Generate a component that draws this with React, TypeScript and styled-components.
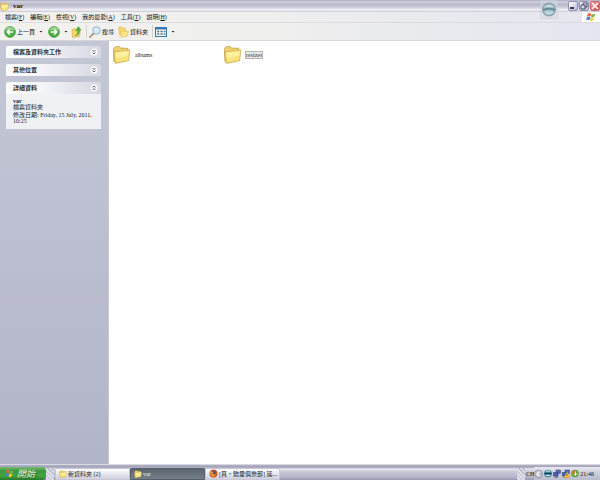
import React from 'react';
import styled, { createGlobalStyle } from 'styled-components';

const GlobalStyle = createGlobalStyle`
  * { box-sizing: border-box; }
  html, body { margin: 0; padding: 0; }
  body, button {
    font-family: "Liberation Serif", "Noto Sans CJK TC", serif;
    font-size: 6px;
    line-height: 8px;
    color: #111;
  }
  button { margin: 0; padding: 0; border: 0; background: none; white-space: nowrap; }
  svg { display: block; flex: none; }
`;

const Desktop = styled.div`
  display: flex;
  flex-direction: column;
  min-height: 100vh;
  background: #fff;
`;

const TitleBar = styled.header`
  display: flex;
  align-items: center;
  height: 12px;
  background: linear-gradient(#a9a9bf 0, #d4d4e0 2px, #b7b7cb 4px, #c9c9d8 7px, #f4f4f9 10px, #c4c4d2 12px);
`;

const TitleText = styled.h1`
  margin: 0 auto 0 4px;
  font-size: 7px;
  line-height: 10px;
`;

const Orb = styled.div`
  align-self: flex-start;
  margin-right: 10px;
  height: 12px;
  z-index: 1;
`;

const WindowButtons = styled.div`
  display: flex;
  gap: 1px;
`;

const WindowButton = styled.button<{ $close?: boolean }>`
  display: flex;
  align-items: center;
  justify-content: center;
  width: 10px;
  height: 10px;
  border: 1px solid ${p => (p.$close ? '#c9696f' : '#8f90b0')};
  border-radius: 2px;
  background: ${p => (p.$close
    ? 'linear-gradient(135deg, #efa5a3, #cf4248)'
    : 'linear-gradient(135deg, #fff, #b7b9d0)')};
`;

const MenuBar = styled.nav`
  display: flex;
  align-items: center;
  gap: 6px;
  height: 11px;
  padding-left: 5px;
  background: linear-gradient(90deg, #f2f1ed, #f0f0ee 40%, #e4e5ef);
  border-bottom: 1px solid #dcdce0;
`;

const FlagBox = styled.div`
  display: flex;
  align-items: center;
  justify-content: center;
  width: 18px;
  height: 10px;
  margin-left: auto;
  background: #fff;
`;

const ToolBar = styled.div`
  display: flex;
  align-items: center;
  height: 18px;
  padding-left: 4px;
  background: linear-gradient(90deg, #f2f1ed, #f0f0ee 40%, #e4e5ef);
  border-bottom: 1px solid #d5d5dc;
`;

const Tool = styled.button<{ $gap?: number }>`
  display: flex;
  align-items: center;
  gap: 1px;
  margin-right: ${p => p.$gap ?? 4}px;
`;

const Caret = styled.span`
  width: 4px;
  height: 2px;
  margin-left: 3px;
  background: #222;
  clip-path: polygon(0 0, 100% 0, 50% 100%);
`;

const Divider = styled.span`
  width: 1px;
  height: 13px;
  margin-right: 2px;
  background: #d3d2d0;
`;

const Body = styled.main`
  display: flex;
  flex: 1;
`;

const SideBar = styled.aside`
  display: flex;
  flex-direction: column;
  gap: 6px;
  width: 109px;
  padding: 5px 7px 0 6px;
  background: linear-gradient(#c4c8d5, #b2b4c9);
  border-right: 1px solid #c6c8d4;
`;

const Panel = styled.section`
  color: #222;
`;

const PanelHeader = styled.button`
  display: flex;
  align-items: center;
  justify-content: space-between;
  width: 100%;
  height: 12px;
  padding: 0 2px 0 7px;
  border-radius: 2px 2px 0 0;
  background: linear-gradient(90deg, #fff, #f6f6f9 35%, #d5d7e2);
  font-weight: bold;
  color: #333;
`;

const PanelBody = styled.div`
  padding: 4px 7px 3px;
  background: #f0f1f5;
  line-height: 6px;
  p { margin: 0 0 2px; }
  strong { display: block; }
`;

const Files = styled.ul`
  display: grid;
  grid-template-columns: 111px 111px;
  align-content: start;
  flex: 1;
  margin: 0;
  padding: 4px 3px;
  list-style: none;
`;

const FileItem = styled.li`
  display: flex;
  align-items: center;
  gap: 4px;
`;

const FileName = styled.span<{ $selected?: boolean }>`
  line-height: 6px;
  color: ${p => (p.$selected ? '#444' : '#222')};
  background: ${p => (p.$selected ? '#e9e8e5' : 'transparent')};
  outline: ${p => (p.$selected ? '1px solid #b4b4b4' : 'none')};
`;

const TaskBar = styled.footer`
  display: flex;
  align-items: center;
  height: 16px;
  padding-top: 2px;
  border-top: 1px solid #d8d8e0;
  background: linear-gradient(#b5b6c9 0, #9c9db4 2px, #e8e8f0 4px, #c5c6d6 7px, #b6b7cb 12px, #9798b1 15px);
`;

const StartButton = styled.button`
  display: flex;
  align-items: center;
  gap: 3px;
  width: 46px;
  height: 13px;
  padding-left: 5px;
  border-radius: 0 4px 4px 0;
  background: linear-gradient(#79bd75, #3c963d 4px, #43a443 9px, #28772c);
  color: #e4f2dd;
  font-size: 9px;
  font-style: italic;
  line-height: 12px;
  text-shadow: 1px 1px 1px #22602a;
`;

const Grip = styled.span`
  width: 8px;
  height: 12px;
  margin: 0 1px 0 0;
  background: repeating-linear-gradient(45deg, #b9bac9 0 1px, #dfe0e9 1px 3px);
`;

const Task = styled.button<{ $active?: boolean }>`
  display: flex;
  align-items: center;
  gap: 1px;
  width: 75px;
  height: 12px;
  padding-left: 3px;
  border: 1px solid ${p => (p.$active ? '#55606d' : '#c6c7d5')};
  border-radius: 1px;
  background: ${p => (p.$active
    ? 'linear-gradient(#5a6570, #747f8a)'
    : 'linear-gradient(#fff, #e0e1ea 6px, #cfd0dd)')};
  color: ${p => (p.$active ? '#f0f2f4' : '#222')};
`;

const Tray = styled.div`
  display: flex;
  align-items: center;
  gap: 1px;
  height: 13px;
  padding: 0 6px 0 0;
  background: linear-gradient(#e9e9f0, #d0d1de 5px, #b9bacc);
`;

const TrayTools = styled.div`
  display: flex;
  align-items: center;
  height: 13px;
  margin-left: auto;
`;

const Folder = ({ size = 8 }: { size?: number }) => (
  <svg width={size} height={size} viewBox="0 0 20 20" aria-hidden="true">
    <path d="M1.500 4.500 2.500 2.500 7 1.200 9 3.200 16.500 3.500 17 5V16L4 19 2 17Z" fill="#ecd270" stroke="#bb9a40" strokeWidth=".8" />
    <path d="M2.500 7 15 6 18.800 5 17.500 16.500 3.500 19.300Z" fill="#fbe47c" stroke="#c8a645" strokeWidth=".7" />
    <path d="M3.500 8 17.500 6.300 17 11 4 14Z" fill="#fff0a0" />
  </svg>
);

const Arrow = ({ forward }: { forward?: boolean }) => (
  <svg width="12" height="12" viewBox="0 0 22 22" aria-hidden="true">
    <circle cx="11" cy="11" r="10" fill="#46ad3e" stroke="#35862f" />
    <path d="M3 9A8 7 0 0 1 19 9Q11 5 3 9Z" fill="#91d287" />
    <path
      d={forward ? 'M5 11H16M11 6 16 11 11 16' : 'M17 11H6M11 6 6 11 11 16'}
      fill="none" stroke="#fff" strokeWidth="3"
    />
  </svg>
);

const WinFlag = ({ size = 9 }: { size?: number }) => (
  <svg width={size} height={size} viewBox="0 0 18 18" aria-hidden="true">
    <path d="M3 3Q6 1 9 3L8 8Q5 6 2 8Z" fill="#e7643b" />
    <path d="M10 3Q13 5 17 3L15 8Q12 10 9 8Z" fill="#77b843" />
    <path d="M2 9Q5 7 8 9L6 15Q3 13 0 15Z" fill="#4c7fd3" />
    <path d="M9 9Q12 11 15 9L13 15Q10 17 7 15Z" fill="#f4c83c" />
  </svg>
);

const Chevron = ({ up }: { up?: boolean }) => (
  <svg width="10" height="10" viewBox="0 0 20 20" aria-hidden="true">
    <circle cx="10" cy="10" r="8" fill="#fff" stroke="#c4c6d3" />
    <path
      d={up ? 'M7 9 10 6 13 9M7 14 10 11 13 14' : 'M7 6 10 9 13 6M7 11 10 14 13 11'}
      fill="none" stroke="#484b60" strokeWidth="1.800"
    />
  </svg>
);

const UpFolder = () => (
  <svg width="11" height="12" viewBox="0 0 22 24" aria-hidden="true">
    <path d="M2 7 8 5 10 8 19 7 17 21 3 23Z" fill="#f3d667" stroke="#c3a13e" />
    <path d="M8 19Q15 17 13 9H9L15 1 20 8H17Q18 18 8 19Z" fill="#4bb13d" stroke="#358c2c" strokeWidth=".7" />
  </svg>
);

const Search = () => (
  <svg width="12" height="12" viewBox="0 0 24 24" aria-hidden="true">
    <path d="M9 15 2 22" stroke="#b59a86" strokeWidth="4" strokeLinecap="round" />
    <circle cx="15" cy="9" r="7.500" fill="#d4eafb" stroke="#8fb0cf" strokeWidth="2" />
    <path d="M10 8Q12 3 17 5Q12 6 10 8Z" fill="#fff" />
  </svg>
);

const FolderTree = () => (
  <svg width="11" height="12" viewBox="0 0 22 24" aria-hidden="true">
    <path d="M1 3 6 1 8 4 15 4V16L3 18Z" fill="#f3d668" stroke="#d8b75a" />
    <path d="M5 11 10 9 12 11 21 10 19 20 6 23Z" fill="#fbe481" stroke="#d8b75a" />
  </svg>
);

const Views = () => (
  <svg width="12" height="10" viewBox="0 0 22 20" preserveAspectRatio="none" aria-hidden="true">
    <rect x="1" y="1" width="20" height="18" fill="#f6fbff" stroke="#3979a4" strokeWidth="2" />
    <path d="M1 3H21" stroke="#3578bb" strokeWidth="4" />
    <path d="M4 9H8M10 9H14M16 9H19M4 14H8M10 14H14M16 14H19" stroke="#487994" strokeWidth="3" />
  </svg>
);

const OrbIcon = () => (
  <svg width="18" height="19" viewBox="0 0 36 38" aria-hidden="true">
    <rect x="1" y="1" width="34" height="36" fill="#d3d7e2" fillOpacity=".5" stroke="#c9ced9" />
    <circle cx="18" cy="19" r="12.500" fill="#a6c1cb" stroke="#89a4b0" strokeWidth="3" />
    <path d="M8 14Q17 6 28 14Z" fill="#c9dde3" />
    <path d="M6 20Q18 15 30 20" fill="none" stroke="#648c9a" strokeWidth="4" />
    <path d="M9 25Q18 21 27 25Q18 33 9 25Z" fill="#c2d9df" />
  </svg>
);

const Firefox = () => (
  <svg width="9" height="9" viewBox="0 0 18 18" aria-hidden="true">
    <circle cx="9" cy="9" r="8" fill="#c9571d" />
    <circle cx="9.500" cy="7" r="4" fill="#4d5878" />
    <path d="M2 4Q5 5 9 6L7 9Q9 13 14 10 12 16 7 15 2 13 2 4Z" fill="#ee9732" />
  </svg>
);

const TrayArrow = () => (
  <svg width="9" height="10" viewBox="0 0 18 20" aria-hidden="true">
    <circle cx="9" cy="10" r="8" fill="#babdcb" stroke="#73778e" />
    <path d="M11 5 6 10 11 15" fill="none" stroke="#fff" strokeWidth="2.500" />
  </svg>
);

const TrayGlobe = () => (
  <svg width="8" height="9" viewBox="0 0 16 18" aria-hidden="true">
    <circle cx="8" cy="9" r="7" fill="#479fae" stroke="#275d70" />
    <path d="M1 9H15" stroke="#183f53" strokeWidth="3" />
    <path d="M4 5Q8 2 12 5M4 13H12" stroke="#d5edf0" strokeWidth="2" fill="none" />
  </svg>
);

const Network = ({ alert }: { alert?: boolean }) => (
  <svg width="8" height="9" viewBox="0 0 16 18" aria-hidden="true">
    <rect x="6" y="2" width="9" height="7" fill="#576cba" stroke="#353f70" />
    <rect x="1" y="7" width="9" height="7" fill="#405dc0" stroke="#303a70" />
    <path d="M3 16H10" stroke="#474f70" strokeWidth="2" />
    {alert && <path d="M10 6 16 17H4Z" fill="#f5ce30" stroke="#c79a2a" />}
    {alert && <path d="M10 10V14" stroke="#3e3515" strokeWidth="1.500" />}
  </svg>
);

const Shield = () => (
  <svg width="8" height="9" viewBox="0 0 16 18" aria-hidden="true">
    <circle cx="8" cy="9" r="7" fill="#65ae38" stroke="#457e2b" />
    <path d="M1 5 6 2 9 7 4 11Z" fill="#dc7435" />
    <path d="M9 5V13M6 10 9 13 13 9" stroke="#eff5ac" strokeWidth="2" fill="none" />
  </svg>
);

const menus = ['檔案(F)', '編輯(E)', '檢視(V)', '我的最愛(A)', '工具(T)', '說明(H)'];

const MenuLabel = ({ text }: { text: string }) => {
  const cut = text.indexOf('(') + 1;
  return <button>{text.slice(0, cut)}<u>{text[cut]}</u>)</button>;
};

export default function App() {
  return (
    <Desktop>
      <GlobalStyle />
      <TitleBar>
        <Folder size={9} />
        <TitleText>var</TitleText>
        <Orb><OrbIcon /></Orb>
        <WindowButtons>
          <WindowButton aria-label="Minimize">
            <svg width="8" height="8" viewBox="0 0 8 8"><path d="M1 6H5" stroke="#363b5c" strokeWidth="2" /></svg>
          </WindowButton>
          <WindowButton aria-label="Restore">
            <svg width="8" height="8" viewBox="0 0 8 8"><path d="M3 3V1H7V5H5M1 3H5V7H1Z" fill="none" stroke="#454a6b" /></svg>
          </WindowButton>
          <WindowButton $close aria-label="Close">
            <svg width="8" height="8" viewBox="0 0 8 8"><path d="M1 1 7 7M7 1 1 7" stroke="#fff" strokeWidth="1.500" /></svg>
          </WindowButton>
        </WindowButtons>
      </TitleBar>
      <MenuBar>
        {menus.map(text => <MenuLabel key={text} text={text} />)}
        <FlagBox><WinFlag size={10} /></FlagBox>
      </MenuBar>
      <ToolBar>
        <Tool $gap={5}><Arrow />上一頁<Caret /></Tool>
        <Tool $gap={3} aria-label="Forward"><Arrow forward /><Caret /></Tool>
        <Tool aria-label="Up"><UpFolder /></Tool>
        <Divider />
        <Tool><Search />搜尋</Tool>
        <Tool><FolderTree />資料夾</Tool>
        <Divider />
        <Tool aria-label="Views" $gap={0}><Views /><Caret /></Tool>
      </ToolBar>
      <Body>
        <SideBar>
          <Panel><PanelHeader>檔案及資料夾工作<Chevron /></PanelHeader></Panel>
          <Panel><PanelHeader>其他位置<Chevron /></PanelHeader></Panel>
          <Panel>
            <PanelHeader>詳細資料<Chevron up /></PanelHeader>
            <PanelBody>
              <p><strong>var</strong>檔案資料夾</p>
              <p>修改日期: Friday, 15 July, 2011, 10:25</p>
            </PanelBody>
          </Panel>
        </SideBar>
        <Files>
          <FileItem><Folder size={19} /><FileName>albums</FileName></FileItem>
          <FileItem><Folder size={19} /><FileName $selected>resizes</FileName></FileItem>
        </Files>
      </Body>
      <TaskBar>
        <StartButton><WinFlag />開始</StartButton>
        <Grip />
        <Task><Folder />新資料夾 (2)</Task>
        <Task $active><Folder />var</Task>
        <Task><Firefox />[真‧矯童俱樂部] 延...</Task>
        <TrayTools><Grip />CH</TrayTools>
        <Tray>
          <TrayArrow />
          <TrayGlobe />
          <Network />
          <Network alert />
          <Shield />
          <time>21:46</time>
        </Tray>
      </TaskBar>
    </Desktop>
  );
}
